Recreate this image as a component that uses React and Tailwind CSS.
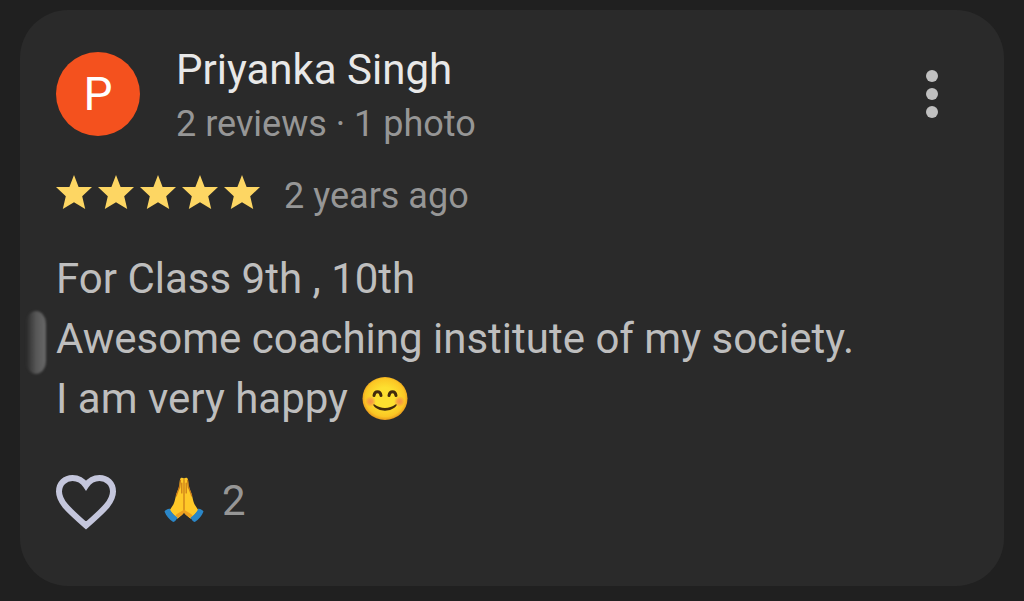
import { useState } from 'react';

const review = {
    author: 'Priyanka Singh',
    stats: '2 reviews · 1 photo',
    rating: 5,
    date: '2 years ago',
    lines: ['For Class 9th , 10th', 'Awesome coaching institute of my society.'],
    closing: 'I am very happy',
    thanks: 2,
};

function Star() {
    return (
        <svg viewBox="0 0 36 36" className="h-9 w-9" fill="#fdd663" aria-hidden="true">
            <path d="M18 0l4.600 12H36l-9.800 9.200L29.200 34 18 27.300 6.800 34l3-12.800L0 12h13.400z" />
        </svg>
    );
}

function SmileEmoji() {
    return (
        <svg viewBox="0 0 46 46" className="h-[46px] w-[46px]" role="img" aria-label="Smiling face">
            <defs>
                <radialGradient id="face" cx=".5" cy=".48" r=".52">
                    <stop offset=".45" stopColor="#fde030" />
                    <stop offset=".85" stopColor="#fbc624" />
                    <stop offset="1" stopColor="#e8981d" />
                </radialGradient>
                <radialGradient id="cheek">
                    <stop offset="0" stopColor="#f4784f" stopOpacity=".7" />
                    <stop offset=".4" stopColor="#f4784f" stopOpacity=".55" />
                    <stop offset="1" stopColor="#f4784f" stopOpacity="0" />
                </radialGradient>
            </defs>
            <ellipse cx="23" cy="22.5" rx="22.5" ry="21.500" fill="url(#face)" />
            <circle cx="8.5" cy="25.500" r="5.500" fill="url(#cheek)" />
            <circle cx="37.5" cy="25.500" r="5.500" fill="url(#cheek)" />
            <g fill="none" stroke="#422b0d" strokeLinecap="round" strokeLinejoin="round">
                <path d="M12 19.500c.8-5 6.200-5 7 0M27 19.500c.8-5 6.200-5 7 0" strokeWidth="3" />
            </g>
            <path d="M12.500 28.500c6 4.500 15 4.500 21 0 .8-.5 1.500.2 1 1.100-4.500 6.800-18.500 6.800-23 0-.5-.9.2-1.600 1-1.100z" fill="#422b0d" />
        </svg>
    );
}

function FoldedHandsEmoji() {
    return (
        <svg viewBox="0 0 40 46" className="h-[46px] w-10" aria-hidden="true">
            <path d="M20 1.500c-1.800-1.200-3.700-.8-4 1l-.7 6.400c-.6 3-2.400 6.200-3.200 9-.9 3.500-1.200 6.300-2.600 9.300L5.500 33.500l7.700 8.300c3.300-2.800 6-4.300 6.800-6.800.8 2.500 3.500 4 6.800 6.800l7.700-8.300-4-6.300c-1.400-3-1.700-5.800-2.600-9.300-.8-2.800-2.600-6-3.200-9L24 2.500c-.3-1.800-2.200-2.200-4-1z" fill="#ffc928" />
            <path d="M20 2.500v32M16.500 3l-.9 8M23.500 3l.9 8M15.500 9.500c-.9 4-2.600 6.700-3.200 9.500M24.500 9.500c.9 4 2.600 6.700 3.200 9.500M17.800 6v10M22.200 6v10" fill="none" stroke="#c97a18" strokeWidth="1.200" strokeLinecap="round" />
            <path d="M20 32.500c-2.500 2.500-5.500 2.500-8.500 6l2.500 2.500c3-2.500 5.500-3.500 6-6 .5 2.500 3 3.500 6 6l2.500-2.500c-3-3.500-6-3.500-8.500-6z" fill="#eda020" />
            <path d="M5.500 31.500c-2.200.7-4.300 1.800-5 3 1.700 4.300 4.900 8.300 8.700 10.500 1.800-.4 3.300-2.200 4.300-4.500-3.500-2-6.200-5-8-9zM34.500 31.500c2.200.7 4.300 1.800 5 3-1.700 4.300-4.900 8.300-8.700 10.500-1.800-.4-3.300-2.200-4.300-4.500 3.500-2 6.200-5 8-9z" fill="#2b87c8" />
        </svg>
    );
}

export default function App() {
    const [liked, setLiked] = useState(false);

    return (
        <main className="min-h-screen bg-[#202020] px-5 pt-2.5 pb-4 font-['Roboto',sans-serif]">
            <article className="relative rounded-[48px] bg-[#2a2a2a] px-9 pt-[30px] pb-[54px]">
                <span className="absolute top-[301px] left-1.5 h-[63px] w-5 rounded-[50%/20%] bg-linear-to-r from-transparent via-[#575757] to-[#686868] blur-[1px]" />

                <header className="flex items-center">
                    <div className="flex h-21 w-21 shrink-0 items-center justify-center rounded-full bg-[#f4511e] text-[46px] text-white">
                        P
                    </div>
                    <div className="ml-9 grow">
                        <h1 className="text-[42px] leading-[60px] text-[#e8e8e8]">{review.author}</h1>
                        <p className="text-4xl leading-12 text-[#969696]">{review.stats}</p>
                    </div>
                    <button type="button" aria-label="More options" className="flex h-21 w-18 shrink-0 items-center justify-center">
                        <svg viewBox="0 0 12 48" className="h-12 w-3" fill="#c0c0c0">
                            <circle cx="6" cy="6" r="6" />
                            <circle cx="6" cy="24" r="6" />
                            <circle cx="6" cy="42" r="6" />
                        </svg>
                    </button>
                </header>

                <div className="mt-[27px] flex items-start gap-6">
                    <div className="flex gap-1.5" role="img" aria-label="5 out of 5 stars">
                        {Array.from({ length: review.rating }, (_, i) => (
                            <Star key={i} />
                        ))}
                    </div>
                    <span className="text-4xl leading-[42px] text-[#969696]">{review.date}</span>
                </div>

                <div className="mt-8 text-[42px] leading-[60px] text-[#bebebe]">
                    {review.lines.map((line) => (
                        <p key={line}>{line}</p>
                    ))}
                    <p className="flex items-center gap-3.5">
                        {review.closing}
                        <SmileEmoji />
                    </p>
                </div>

                <div className="mt-[43px] flex h-15 items-center">
                    <button type="button" aria-label="Like" aria-pressed={liked} onClick={() => setLiked(!liked)}>
                        <svg viewBox="0 0 60 56" className="h-14 w-15" fill={liked ? '#c4c6dc' : 'none'} stroke="#c4c6dc" strokeWidth="6">
                            <path d="M30 51.500C17 39.500 3 29.500 3 17.500 3 9.500 9 4 16.500 4 22 4 27 7 30 11.500 33 7 38 4 43.500 4 51 4 57 9.500 57 17.500 57 29.500 43 39.500 30 51.500z" />
                        </svg>
                    </button>
                    <button type="button" aria-label="2 thanks" className="ml-12 flex items-center gap-[18px] pb-1 text-[42px] text-[#969696]">
                        <FoldedHandsEmoji />
                        {review.thanks}
                    </button>
                </div>
            </article>
        </main>
    );
}
